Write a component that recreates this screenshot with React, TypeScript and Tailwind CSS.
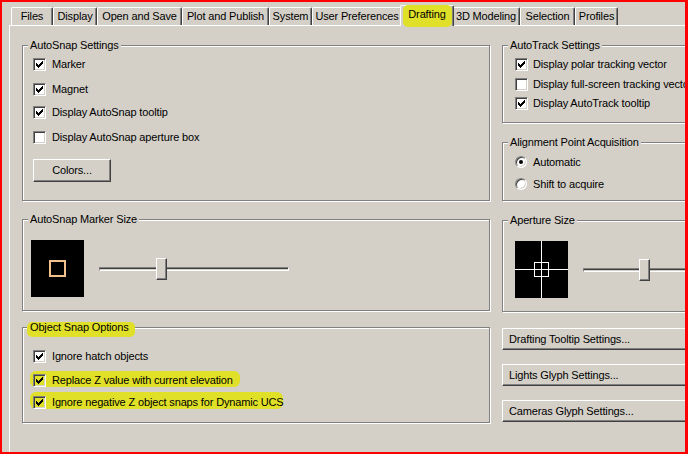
import React from "react";

const CHECK_COLS: [number, number][] = [
  [3, 5],
  [4, 6],
  [5, 7],
  [6, 6],
  [7, 5],
  [8, 4],
  [9, 3],
];

function Check({ checked, hl }: { checked?: boolean; hl?: boolean }) {
  return (
    <div
      className={
        hl
          ? "relative w-[13px] h-[13px] shrink-0 border border-t-[#808080] border-l-[#808080] border-b-white border-r-white shadow-[inset_1px_1px_0_#404040,inset_-1px_-1px_0_#d4d0c8] bg-[#e0e028]"
          : "relative w-[13px] h-[13px] shrink-0 border border-t-[#808080] border-l-[#808080] border-b-white border-r-white shadow-[inset_1px_1px_0_#404040,inset_-1px_-1px_0_#d4d0c8] bg-white"
      }
    >
      {checked && (
        <svg width="13" height="13" viewBox="0 0 13 13" className="absolute -left-px -top-px" shapeRendering="crispEdges">
          {CHECK_COLS.map(([x, y]) => (
            <rect key={x} x={x} y={y} width="1" height="3" fill="#000" />
          ))}
        </svg>
      )}
    </div>
  );
}

function Radio({ on }: { on?: boolean }) {
  return (
    <div className="w-[12px] h-[12px] shrink-0 rounded-full border border-t-[#808080] border-l-[#808080] border-b-white border-r-white shadow-[inset_1px_1px_0_#404040,inset_-1px_-1px_0_#d4d0c8] bg-white flex items-center justify-center">
      {on && <div className="w-[4px] h-[4px] rounded-full bg-black" />}
    </div>
  );
}

function Label({ text, hl }: { text: string; hl?: boolean }) {
  return (
    <div className="relative -mt-[7px] ml-[5px] px-[2px] w-fit h-[13px] leading-[13px] bg-[#d4d0c8] whitespace-nowrap">
      {hl && <span className="absolute -left-[1px] -right-[4px] top-[1px] -bottom-[3px] bg-[#e0e028] rounded-[5px]" />}
      <span className="relative">{text}</span>
    </div>
  );
}

function Box({ className, children }: { className: string; children: React.ReactNode }) {
  return (
    <div className={"border border-[#808080] shadow-[inset_1px_1px_0_#fff,1px_1px_0_#fff] flex flex-col " + className}>
      {children}
    </div>
  );
}

function Slider({ className, thumb }: { className: string; thumb: number }) {
  return (
    <div className={"relative h-[22px] shrink-0 " + className}>
      <div className="absolute left-0 right-0 top-[9px] h-[4px] border border-t-[#808080] border-l-[#808080] border-b-white border-r-white shadow-[inset_0_1px_0_#404040]" />
      <div
        className="absolute top-0 w-[11px] h-[22px] bg-[#d4d0c8] border border-t-white border-l-white border-b-[#404040] border-r-[#404040] shadow-[inset_-1px_-1px_0_#808080]"
        style={{ left: thumb }}
      />
    </div>
  );
}

function Btn({ className, children }: { className: string; children: React.ReactNode }) {
  return (
    <div
      className={
        "flex items-center bg-[#d4d0c8] border border-t-white border-l-white border-b-[#404040] border-r-[#404040] shadow-[inset_-1px_-1px_0_#808080] whitespace-nowrap " +
        className
      }
    >
      {children}
    </div>
  );
}

const TABS: { label: string; w: number; sel?: boolean }[] = [
  { label: "Files", w: 42 },
  { label: "Display", w: 44 },
  { label: "Open and Save", w: 85 },
  { label: "Plot and Publish", w: 87 },
  { label: "System", w: 43 },
  { label: "User Preferences", w: 90 },
  { label: "Drafting", w: 50, sel: true },
  { label: "3D Modeling", w: 68 },
  { label: "Selection", w: 55 },
  { label: "Profiles", w: 43 },
];

function Tab({ label, w, sel }: { label: string; w: number; sel?: boolean }) {
  if (sel) {
    return (
      <div
        className="relative z-10 -mx-[2px] -mb-px h-[21px] shrink-0 flex items-center justify-center pb-[3px] bg-[#d4d0c8] border-t border-l border-white border-r border-r-[#404040] shadow-[inset_-1px_0_0_#808080] rounded-t-[2px]"
        style={{ width: w + 4 }}
      >
        <span className="absolute left-[2px] right-[1px] -top-[1px] -bottom-[1px] bg-[#e0e028] rounded-[5px]" />
        <span className="relative">{label}</span>
      </div>
    );
  }
  return (
    <div
      className="h-[18px] shrink-0 flex items-center justify-center border-t border-l border-white border-r border-r-[#404040] shadow-[inset_-1px_0_0_#808080] rounded-t-[2px] whitespace-nowrap"
      style={{ width: w }}
    >
      {label}
    </div>
  );
}

function Row({ children, className }: { children: React.ReactNode; className: string }) {
  return <div className={"relative flex items-center whitespace-nowrap " + className}>{children}</div>;
}

export default function App() {
  return (
    <div className="w-[688px] h-[454px] overflow-hidden bg-[#d4d0c8] border-t-2 border-l-2 border-r-[3px] border-b-2 border-[#ff0000] text-[11px] leading-[13px] tracking-[-0.15px] text-black font-['Liberation_Sans',Arial,sans-serif]">
      <div className="flex items-end h-[20px] mt-[3px] ml-[9px]">
        {TABS.map((t) => (
          <Tab key={t.label} {...t} />
        ))}
      </div>
      <div className="ml-[7px] w-[700px] h-[440px] border-t border-l border-white flex gap-[12px] pl-[12px] pt-[19px]">
        {/* Left column */}
        <div className="w-[468px] shrink-0 flex flex-col">
          <Box className="h-[156px]">
            <Label text="AutoSnap Settings" />
            <Row className="h-[13px] mt-[6px] ml-[10px] gap-[6px]">
              <Check checked />
              <span>Marker</span>
            </Row>
            <Row className="h-[13px] mt-[12px] ml-[10px] gap-[6px]">
              <Check checked />
              <span>Magnet</span>
            </Row>
            <Row className="h-[13px] mt-[10px] ml-[10px] gap-[6px]">
              <Check checked />
              <span>Display AutoSnap tooltip</span>
            </Row>
            <Row className="h-[13px] mt-[12px] ml-[10px] gap-[6px]">
              <Check />
              <span>Display AutoSnap aperture box</span>
            </Row>
            <Btn className="mt-[15px] ml-[10px] w-[78px] h-[23px] justify-center">Colors...</Btn>
          </Box>
          <Box className="mt-[18px] h-[92px]">
            <Label text="AutoSnap Marker Size" />
            <div className="mt-[14px] ml-[8px] flex items-center gap-[15px]">
              <svg width="53" height="57" viewBox="0 0 53 57" className="shrink-0">
                <rect width="53" height="57" fill="#000" />
                <rect x="19" y="21" width="15" height="15" fill="none" stroke="#f2c08c" strokeWidth="2" />
              </svg>
              <Slider className="w-[190px]" thumb={57} />
            </div>
          </Box>
          <Box className="mt-[16px] h-[96px]">
            <Label text="Object Snap Options" hl />
            <Row className="h-[13px] mt-[16px] ml-[10px] gap-[6px]">
              <Check checked />
              <span>Ignore hatch objects</span>
            </Row>
            <Row className="h-[13px] mt-[11px] ml-[10px] gap-[6px]">
              <span className="absolute -left-[3px] -top-[3px] w-[210px] h-[16px] bg-[#e0e028] rounded-[6px]" />
              <span className="relative">
                <Check checked hl />
              </span>
              <span className="relative">Replace Z value with current elevation</span>
            </Row>
            <Row className="h-[13px] mt-[9px] ml-[10px] gap-[6px]">
              <span className="absolute -left-[3px] -top-[4px] w-[253px] h-[17px] bg-[#e0e028] rounded-[6px]" />
              <span className="relative">
                <Check checked hl />
              </span>
              <span className="relative">Ignore negative Z object snaps for Dynamic UCS</span>
            </Row>
          </Box>
        </div>

        {/* Right column */}
        <div className="w-[200px] shrink-0 flex flex-col">
          <Box className="h-[78px]">
            <Label text="AutoTrack Settings" />
            <Row className="h-[13px] mt-[6px] ml-[12px] gap-[5px]">
              <Check checked />
              <span>Display polar tracking vector</span>
            </Row>
            <Row className="h-[13px] mt-[7px] ml-[12px] gap-[5px]">
              <Check />
              <span>Display full-screen tracking vector</span>
            </Row>
            <Row className="h-[13px] mt-[6px] ml-[12px] gap-[5px]">
              <Check checked />
              <span>Display AutoTrack tooltip</span>
            </Row>
          </Box>
          <Box className="mt-[19px] h-[59px]">
            <Label text="Alignment Point Acquisition" />
            <Row className="h-[12px] mt-[7px] ml-[12px] gap-[6px]">
              <Radio on />
              <span>Automatic</span>
            </Row>
            <Row className="h-[12px] mt-[10px] ml-[12px] gap-[6px]">
              <Radio />
              <span>Shift to acquire</span>
            </Row>
          </Box>
          <Box className="mt-[19px] h-[92px]">
            <Label text="Aperture Size" />
            <div className="mt-[14px] ml-[12px] flex items-center gap-[15px]">
              <svg width="53" height="57" viewBox="0 0 53 57" className="shrink-0" shapeRendering="crispEdges">
                <rect width="53" height="57" fill="#000" />
                <rect x="26" y="0" width="1" height="57" fill="#fff" />
                <rect x="0" y="28" width="53" height="1" fill="#fff" />
                <rect x="19.5" y="21.5" width="14" height="14" fill="none" stroke="#fff" strokeWidth="1" />
              </svg>
              <Slider className="w-[130px]" thumb={56} />
            </div>
          </Box>
          <Btn className="mt-[16px] h-[22px] pl-[6px]">Drafting Tooltip Settings...</Btn>
          <Btn className="mt-[14px] h-[22px] pl-[6px]">Lights Glyph Settings...</Btn>
          <Btn className="mt-[14px] h-[22px] pl-[6px]">Cameras Glyph Settings...</Btn>
        </div>
      </div>
    </div>
  );
}
